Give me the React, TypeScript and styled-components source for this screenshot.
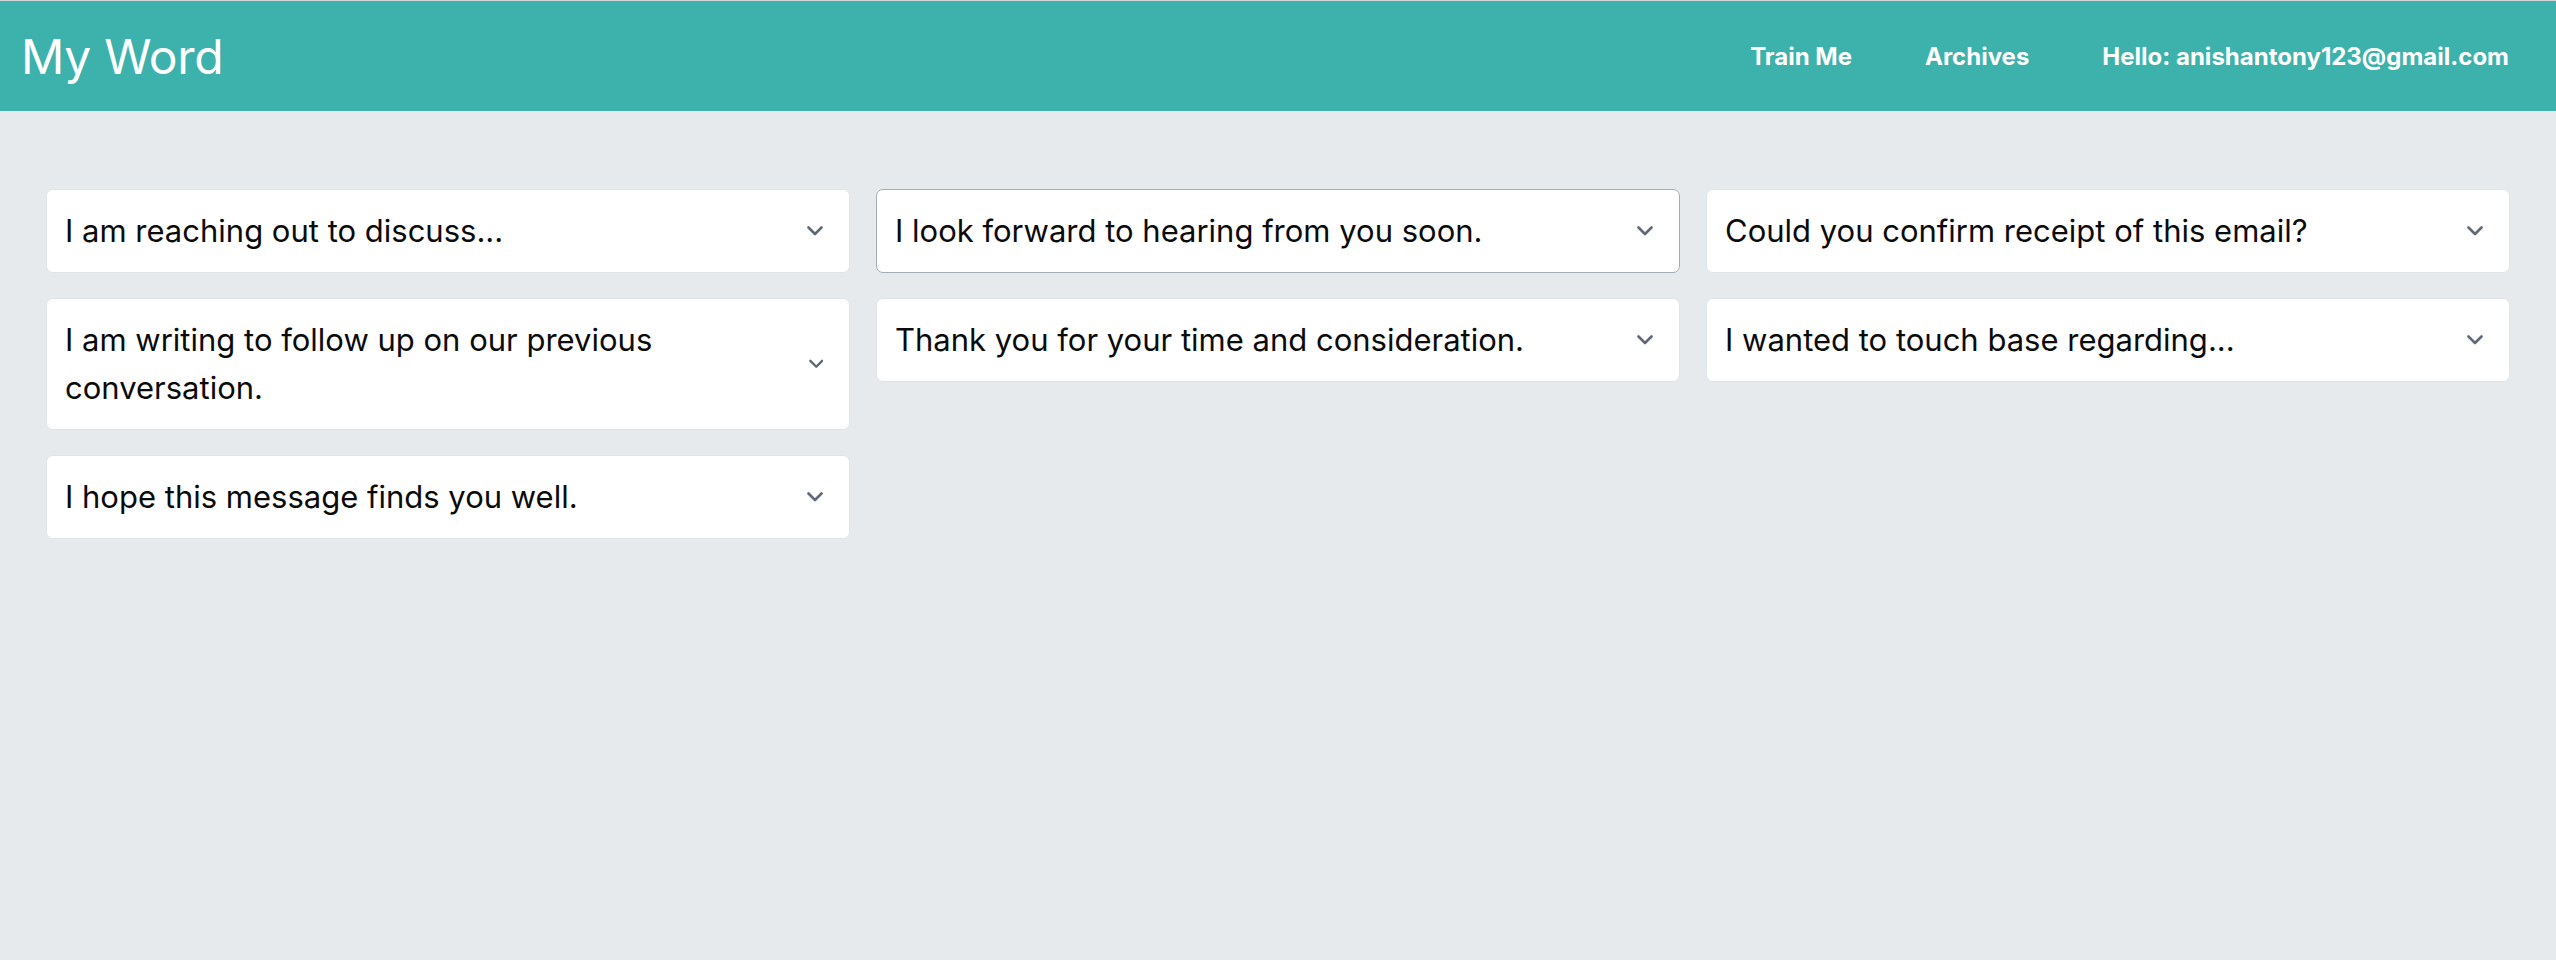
import React from "react";
import styled, { createGlobalStyle } from "styled-components";

const GlobalStyle = createGlobalStyle`
  html, body {
    margin: 0;
    padding: 0;
    background: #e7eaed;
    font-family: Inter, "Liberation Sans", sans-serif;
  }
  * { box-sizing: border-box; }
`;

const Page = styled.div`
  min-height: 960px;
  background: #e7eaed;
`;

const Header = styled.header`
  height: 111px;
  background: #3db1ab;
  border-top: 1px solid #d3d7da;
  display: flex;
  align-items: center;
  justify-content: space-between;
  padding: 0 47px 0 21px;
  color: #ffffff;
`;

const Brand = styled.h1`
  margin: 0;
  font-size: 48px;
  font-weight: 400;
  letter-spacing: -0.3px;
`;

const Nav = styled.nav`
  display: flex;
  align-items: center;
  gap: 73px;
`;

const NavLink = styled.a`
  font-size: 24px;
  font-weight: 700;
  color: #ffffff;
  text-decoration: none;
`;

const Board = styled.main`
  display: grid;
  grid-template-columns: repeat(3, 1fr);
  gap: 26px;
  padding: 78px 46px 0;
  align-items: start;
`;

const Column = styled.div`
  display: flex;
  flex-direction: column;
  gap: 25px;
`;

const Card = styled.div<{ $active?: boolean }>`
  display: flex;
  align-items: center;
  justify-content: space-between;
  gap: 24px;
  background: #ffffff;
  border: 1px solid ${(p) => (p.$active ? "#a3adb5" : "#e1e4e8")};
  border-radius: 7px;
  padding: 17px 26px 17px 18px;
  cursor: pointer;
`;

const Phrase = styled.span`
  font-size: 31px;
  line-height: 48px;
  color: #0b0b0b;
`;

const Chevron = () => (
  <svg width="16" height="10" viewBox="0 0 16 10" fill="none">
    <polyline
      points="1.5,1.5 8,8 14.5,1.5"
      stroke="#5f6977"
      strokeWidth="2.6"
      strokeLinecap="round"
      strokeLinejoin="round"
    />
  </svg>
);

const columns: { text: string; active?: boolean }[][] = [
  [
    { text: "I am reaching out to discuss..." },
    { text: "I am writing to follow up on our previous conversation." },
    { text: "I hope this message finds you well." },
  ],
  [
    { text: "I look forward to hearing from you soon.", active: true },
    { text: "Thank you for your time and consideration." },
  ],
  [
    { text: "Could you confirm receipt of this email?" },
    { text: "I wanted to touch base regarding..." },
  ],
];

export default function App() {
  return (
    <Page>
      <GlobalStyle />
      <Header>
        <Brand>My Word</Brand>
        <Nav>
          <NavLink href="#">Train Me</NavLink>
          <NavLink href="#">Archives</NavLink>
          <NavLink href="#">Hello: anishantony123@gmail.com</NavLink>
        </Nav>
      </Header>
      <Board>
        {columns.map((col, i) => (
          <Column key={i}>
            {col.map((item) => (
              <Card key={item.text} $active={item.active}>
                <Phrase>{item.text}</Phrase>
                <Chevron />
              </Card>
            ))}
          </Column>
        ))}
      </Board>
    </Page>
  );
}
